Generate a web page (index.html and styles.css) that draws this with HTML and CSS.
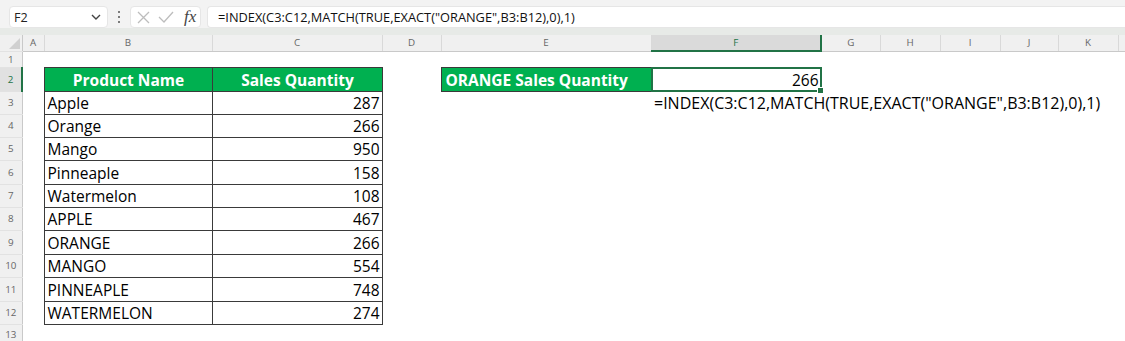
FILE: index.html
```html
<!DOCTYPE html>
<html lang="en">

<head>
    <meta charset="UTF-8">
    <meta name="viewport" content="width=device-width, initial-scale=1.0">
    <title>INDEX MATCH EXACT</title>
    <link rel="stylesheet" href="styles.css">
</head>

<body>
    <div class="formula-bar">
        <div class="name-box">
            <span>F2</span>
            <svg width="10" height="6" viewBox="0 0 10 6"><path d="M1 1l4 4 4-4" /></svg>
        </div>
        <div class="dots"><i></i><i></i><i></i></div>
        <div class="fx-box">
            <svg class="cancel" width="13" height="13" viewBox="0 0 13 13"><path d="M1 1l11 11M12 1L1 12" /></svg>
            <svg class="enter" width="16" height="12" viewBox="0 0 16 12"><path d="M1 6l5 5L15 1" /></svg>
            <span class="fx">fx</span>
        </div>
        <div class="formula-input">=INDEX(C3:C12,MATCH(TRUE,EXACT("ORANGE",B3:B12),0),1)</div>
    </div>
    <div class="band"></div>

    <table class="sheet">
        <colgroup>
            <col class="w-rowhead">
            <col class="w-a">
            <col class="w-b">
            <col class="w-c">
            <col class="w-d">
            <col class="w-e">
            <col class="w-f">
            <col class="w-g">
            <col class="w-h">
            <col class="w-i">
            <col class="w-j">
            <col class="w-k">
            <col class="w-l">
        </colgroup>
        <tr class="col-heads">
            <th class="corner"><svg width="11" height="11" viewBox="0 0 11 11"><polygon points="11,0 11,11 0,11" /></svg></th>
            <th>A</th><th>B</th><th>C</th><th>D</th><th>E</th>
            <th class="active">F</th>
            <th>G</th><th>H</th><th>I</th><th>J</th><th>K</th><th></th>
        </tr>
        <tr class="h16">
            <th>1</th><td colspan="12"></td>
        </tr>
        <tr class="h24">
            <th class="active">2</th>
            <td></td>
            <td class="head">Product Name</td>
            <td class="head">Sales Quantity</td>
            <td></td>
            <td class="label">ORANGE Sales Quantity</td>
            <td class="result"><div class="selection"><i></i></div>266</td>
            <td colspan="6"></td>
        </tr>
        <tr class="h23">
            <th>3</th><td></td><td class="name">Apple</td><td class="qty">287</td><td></td><td></td>
            <td class="formula-text" colspan="7">=INDEX(C3:C12,MATCH(TRUE,EXACT("ORANGE",B3:B12),0),1)</td>
        </tr>
        <tr class="h23">
            <th>4</th><td></td><td class="name">Orange</td><td class="qty">266</td><td colspan="9"></td>
        </tr>
        <tr class="h23">
            <th>5</th><td></td><td class="name">Mango</td><td class="qty">950</td><td colspan="9"></td>
        </tr>
        <tr class="h24">
            <th>6</th><td></td><td class="name">Pinneaple</td><td class="qty">158</td><td colspan="9"></td>
        </tr>
        <tr class="h23">
            <th>7</th><td></td><td class="name">Watermelon</td><td class="qty">108</td><td colspan="9"></td>
        </tr>
        <tr class="h23">
            <th>8</th><td></td><td class="name">APPLE</td><td class="qty">467</td><td colspan="9"></td>
        </tr>
        <tr class="h24">
            <th>9</th><td></td><td class="name">ORANGE</td><td class="qty">266</td><td colspan="9"></td>
        </tr>
        <tr class="h23">
            <th>10</th><td></td><td class="name">MANGO</td><td class="qty">554</td><td colspan="9"></td>
        </tr>
        <tr class="h24">
            <th>11</th><td></td><td class="name">PINNEAPLE</td><td class="qty">748</td><td colspan="9"></td>
        </tr>
        <tr class="h23">
            <th>12</th><td></td><td class="name">WATERMELON</td><td class="qty">274</td><td colspan="9"></td>
        </tr>
        <tr class="h20">
            <th>13</th><td colspan="12"></td>
        </tr>
    </table>
</body>

</html>
```

FILE: styles.css
```css
/* Base */
body {
    margin: 0;
    background: #fff;
    font-family: 'Open Sans', 'Noto Sans', sans-serif;
    color: #000;
    overflow: hidden;
}

/* Formula bar */
.formula-bar {
    display: flex;
    align-items: center;
    height: 22px;
    padding: 6px 0 0 9px;
    background: #f3f3f3;
}

.name-box,
.fx-box,
.formula-input {
    height: 22px;
    background: #fff;
    border-radius: 4px;
    box-sizing: border-box;
    border: 1px solid #e6e6e6;
    display: flex;
    align-items: center;
}

.name-box {
    width: 99px;
    padding: 0 6px 0 4px;
    justify-content: space-between;
    font-size: 12.6px;
    color: #222;
}

.name-box svg path {
    fill: none;
    stroke: #444;
    stroke-width: 1.4;
}

.dots {
    width: 22px;
    display: flex;
    flex-direction: column;
    align-items: center;
    gap: 2.5px;
}

.dots i {
    width: 2.5px;
    height: 2.5px;
    border-radius: 50%;
    background: #555;
}

.fx-box {
    width: 71px;
    padding-left: 6px;
}

.fx-box svg path {
    fill: none;
    stroke: #bdbdbd;
    stroke-width: 1.3;
}

.fx-box .cancel {
    margin-right: 8px;
}

.fx {
    margin-left: 10px;
    font-family: 'Liberation Serif', serif;
    font-style: italic;
    font-size: 17px;
    color: #444;
}

.formula-input {
    flex: 1;
    margin-left: 6px;
    padding-left: 10px;
    border-right: none;
    border-radius: 4px 0 0 4px;
    font-size: 12.8px;
    color: #111;
    white-space: nowrap;
}

.band {
    height: 7px;
    background: #e7eae7;
}

/* Sheet grid */
.sheet {
    border-collapse: collapse;
    table-layout: fixed;
    width: 1125px;
    font-size: 15.5px;
}

.w-rowhead { width: 22px; }
.w-a { width: 22px; }
.w-b { width: 168px; }
.w-c { width: 170px; }
.w-d { width: 59px; }
.w-e { width: 210px; }
.w-f { width: 170px; }
.w-g { width: 59px; }
.w-h { width: 60px; }
.w-i { width: 60px; }
.w-j { width: 58px; }
.w-k { width: 60px; }
.w-l { width: 7px; }

.sheet th {
    background: #f0f0f0;
    color: #666;
    font-weight: normal;
    font-size: 9.8px;
    padding: 0;
    text-align: center;
}

.col-heads {
    height: 16px;
}

.col-heads th {
    border-right: 1px solid #d9d9d9;
    border-bottom: 1px solid #c9c9c9;
    vertical-align: middle;
}

.col-heads th.corner {
    position: relative;
    border-right: 1px solid #c9c9c9;
}

.corner svg {
    position: absolute;
    right: 2px;
    bottom: 2px;
}

.corner polygon {
    fill: #d0d0d0;
}

.col-heads th.active {
    background: #dadada;
    color: #217346;
    border-bottom: 2px solid #217346;
}

tr > th:first-child {
    border-right: 1px solid #c9c9c9;
    border-bottom: 1px solid #e2e2e2;
    vertical-align: middle;
}

tr > th.active {
    background: #e1e1e1;
    color: #217346;
    border-right: 2px solid #217346;
}

.h16 { height: 16px; }
.h20 { height: 20px; }
.h23 { height: 23px; }
.h24 { height: 24px; }

.sheet td {
    padding: 0 2px 1px 3px;
    vertical-align: bottom;
    line-height: 20px;
    white-space: nowrap;
}

/* Data table */
.sheet td.head,
.sheet td.label {
    background: #00b050;
    color: #fff;
    font-weight: bold;
    border: 1px solid #3a3a3a;
}

.sheet td.head {
    text-align: center;
}

.sheet td.label {
    padding-left: 4px;
}

.sheet td.name,
.sheet td.qty {
    border: 1px solid #3a3a3a;
}

.sheet td.qty,
.sheet td.result {
    text-align: right;
}

.sheet td.result {
    position: relative;
    border: 1px solid #3a3a3a;
}

.selection {
    position: absolute;
    left: -1px;
    top: -1px;
    right: -1px;
    bottom: -1px;
    border: 2px solid #217346;
}

.selection i {
    position: absolute;
    right: -4px;
    bottom: -4px;
    width: 5px;
    height: 5px;
    background: #217346;
    border: 1px solid #fff;
}

.sheet td.formula-text {
    overflow: visible;
    font-size: 16px;
}
```
